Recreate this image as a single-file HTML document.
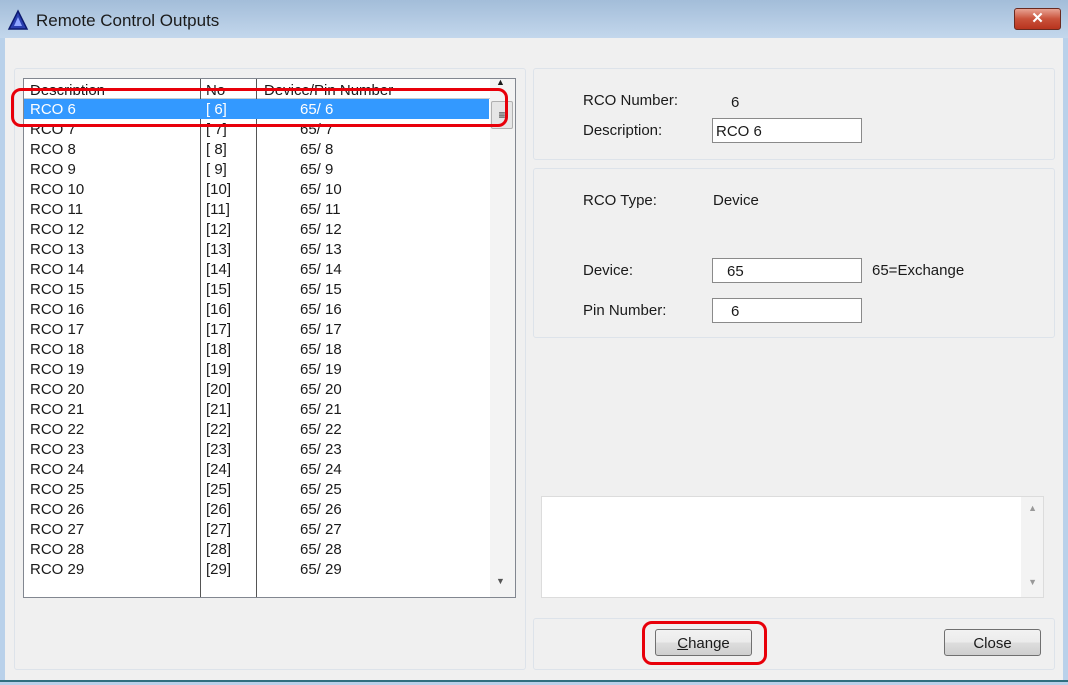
<!DOCTYPE html>
<html><head><style>
*{margin:0;padding:0;box-sizing:border-box}
body{width:1068px;height:685px;position:relative;overflow:hidden;background:#fff;font-family:"Liberation Sans",sans-serif;font-size:15px;color:#1a1a1a;letter-spacing:0}
.a{position:absolute}
.panel{position:absolute;border:1px solid #dde3ea;border-radius:3px;background:#f0f0f0}
.in{position:absolute;background:#fff;border:1px solid #8a8a8a;padding-left:3px;line-height:25px}
.btn{position:absolute;border:1px solid #707070;border-radius:3px;background:linear-gradient(#f2f2f2,#ebebeb 50%,#dddddd 51%,#cfcfcf);text-align:center;line-height:25px}
.row{position:absolute;left:0;height:20px;line-height:21px;width:465px}
.row span{position:absolute}
</style></head><body>
<div class="a" style="left:0;top:0;width:1068px;height:685px;background:#f0f0f0;border-left:5px solid #b9d1ea;border-right:5px solid #b9d1ea"></div>
<div class="a" style="left:0;top:0;width:1068px;height:38px;background:linear-gradient(#a3bdd9,#c3d7ec)"></div>
<svg class="a" style="left:7px;top:9px" width="22" height="22"><polygon points="11,2 20,20 2,20" fill="#2a3fb0" stroke="#0c1a70" stroke-width="1.5"/><polygon points="11,8 15,17 7,17" fill="#8fa6ff"/></svg>
<div class="a" style="left:36px;top:11px;font-size:17px;color:#1b1b1b">Remote Control Outputs</div>
<div class="a" style="left:1014px;top:8px;width:47px;height:22px;border:1px solid #6a2a20;border-radius:3px;background:linear-gradient(#e8a393,#c9513a 50%,#b8341e);color:#fff;font-weight:bold;text-align:center;line-height:20px;font-size:15px">✕</div>
<div class="a" style="left:0;top:680px;width:1068px;height:2px;background:#2f6f7f"></div>
<div class="a" style="left:5px;top:682px;width:1058px;height:3px;background:#b9d1ea"></div>

<div class="panel" style="left:14px;top:68px;width:512px;height:602px"></div>
<div class="a" style="left:23px;top:78px;width:493px;height:520px;background:#fff;border:1px solid #828790">
 <div class="a" style="left:0;top:0;width:466px;height:20px;border-bottom:1px solid #ccc"></div>
 <div class="a" style="left:176px;top:0;width:1px;height:518px;background:#555"></div>
 <div class="a" style="left:232px;top:0;width:1px;height:518px;background:#555"></div>
 <div class="a" style="left:6px;top:2px;line-height:20px;height:14px;overflow:hidden">Description</div>
 <div class="a" style="left:182px;top:2px;line-height:20px;height:14px;overflow:hidden">No</div>
 <div class="a" style="left:240px;top:2px;line-height:20px;height:14px;overflow:hidden">Device/Pin Number</div>
 <div class="a" style="left:466px;top:0;width:25px;height:518px;background:#f3f3f3"></div>
 <div class="a" style="left:467px;top:22px;width:22px;height:28px;border:1px solid #b0b0b0;border-radius:2px;background:#e6e6e6;text-align:center;font-size:12px;line-height:26px">≡</div>
 <div class="a" style="left:472px;top:-2px;font-size:9px">▲</div>
 <div class="a" style="left:472px;top:497px;font-size:9px;color:#555">▼</div>
 <div id="rows"></div>
</div>
<div class="a" style="left:11px;top:88px;width:497px;height:39px;border:3px solid #e8000a;border-radius:10px"></div>

<div class="panel" style="left:533px;top:68px;width:522px;height:92px"></div>
<div class="a" style="left:583px;top:92px">RCO Number:</div>
<div class="a" style="left:731px;top:94px">6</div>
<div class="a" style="left:583px;top:122px">Description:</div>
<div class="in" style="left:712px;top:118px;width:150px;height:25px">RCO 6</div>

<div class="panel" style="left:533px;top:168px;width:522px;height:170px"></div>
<div class="a" style="left:583px;top:192px">RCO Type:</div>
<div class="a" style="left:713px;top:192px">Device</div>
<div class="a" style="left:583px;top:262px">Device:</div>
<div class="in" style="left:712px;top:258px;width:150px;height:25px;padding-left:14px">65</div>
<div class="a" style="left:872px;top:262px">65=Exchange</div>
<div class="a" style="left:583px;top:302px">Pin Number:</div>
<div class="in" style="left:712px;top:298px;width:150px;height:25px;padding-left:18px">6</div>

<div class="a" style="left:541px;top:496px;width:503px;height:102px;background:#fff;border:1px solid #dcdcdc">
 <div class="a" style="right:0;top:0;width:22px;height:100px;background:#f3f3f3"></div>
 <div class="a" style="right:6px;top:6px;font-size:9px;color:#999">▲</div>
 <div class="a" style="right:6px;top:80px;font-size:9px;color:#999">▼</div>
</div>

<div class="panel" style="left:533px;top:618px;width:522px;height:52px"></div>
<div class="btn" style="left:655px;top:629px;width:97px;height:27px;line-height:27px"><u>C</u>hange</div>
<div class="btn" style="left:944px;top:629px;width:97px;height:27px;line-height:27px">Close</div>
<div class="a" style="left:642px;top:621px;width:125px;height:44px;border:3px solid #e8000a;border-radius:10px"></div>

<script>
var h='';
for(var i=6;i<=29;i++){
 var y=20+(i-6)*20, sel=i==6;
 var n=i<10?'[ '+i+']':'['+i+']', d='65/ '+i;
 h+='<div class="row" style="top:'+y+'px;'+(sel?'background:#3399ff;color:#fff;':'')+'"><span style="left:6px">RCO '+i+'</span><span style="left:182px">'+n+'</span><span style="left:276px">'+d+'</span></div>';
}
document.getElementById('rows').innerHTML=h;
</script>
</body></html>
